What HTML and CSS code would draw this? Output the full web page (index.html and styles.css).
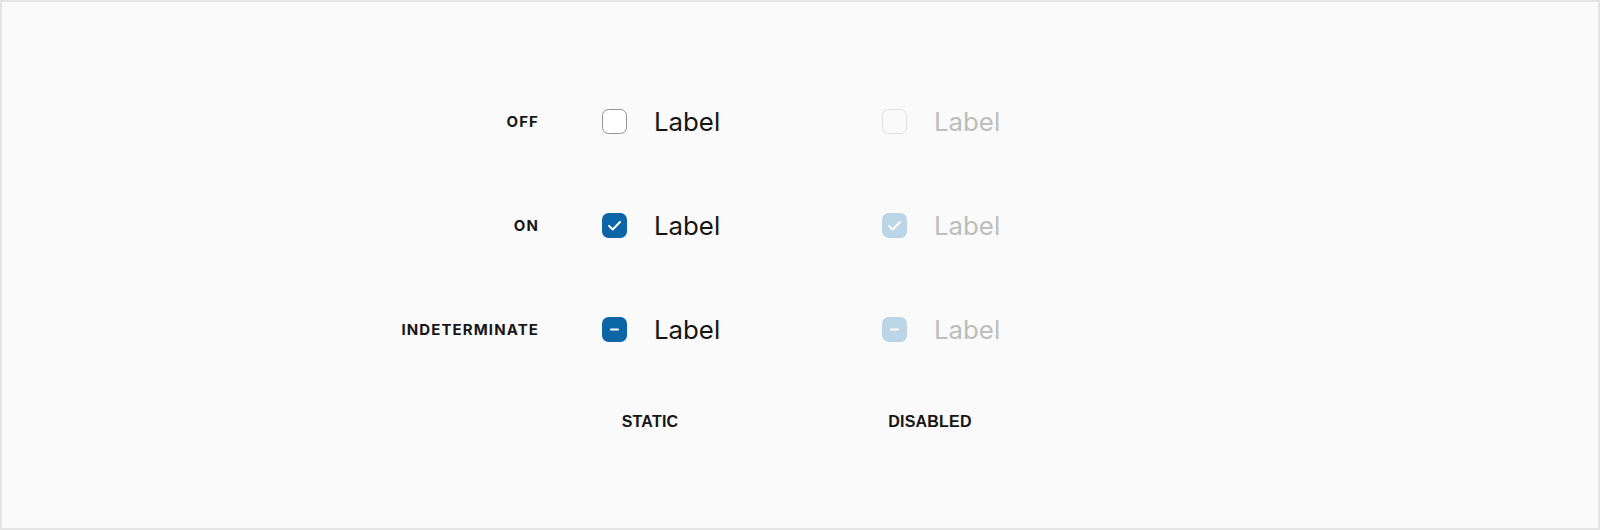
FILE: index.html
```html
<!DOCTYPE html>
<html>
<head>
<meta charset="utf-8">
<link rel="stylesheet" href="styles.css">
</head>
<body>
<div class="frame">
  <div class="grid">
    <div class="row-label">OFF</div>
    <div class="cell">
      <span class="box box-off"></span><span class="label">Label</span>
    </div>
    <div class="cell">
      <span class="box box-off-disabled"></span><span class="label label-disabled">Label</span>
    </div>

    <div class="row-label">ON</div>
    <div class="cell">
      <span class="box box-on"><svg viewBox="0 0 25 25" width="25" height="25"><path d="M7 12.9 L10.7 16.5 L18 9" fill="none" stroke="#fff" stroke-width="2" stroke-linecap="round" stroke-linejoin="round"/></svg></span><span class="label">Label</span>
    </div>
    <div class="cell">
      <span class="box box-on-disabled"><svg viewBox="0 0 25 25" width="25" height="25"><path d="M7 12.9 L10.7 16.5 L18 9" fill="none" stroke="#fff" stroke-width="2" stroke-linecap="round" stroke-linejoin="round"/></svg></span><span class="label label-disabled">Label</span>
    </div>

    <div class="row-label">INDETERMINATE</div>
    <div class="cell">
      <span class="box box-on"><svg viewBox="0 0 25 25" width="25" height="25"><path d="M9 12.5 H16" fill="none" stroke="#fff" stroke-width="2" stroke-linecap="round"/></svg></span><span class="label">Label</span>
    </div>
    <div class="cell">
      <span class="box box-on-disabled"><svg viewBox="0 0 25 25" width="25" height="25"><path d="M9 12.5 H16" fill="none" stroke="#fff" stroke-width="2" stroke-linecap="round"/></svg></span><span class="label label-disabled">Label</span>
    </div>

    <div></div>
    <div class="col-head">STATIC</div>
    <div class="col-head">DISABLED</div>
  </div>
</div>
</body>
</html>
```

FILE: styles.css
```css
html, body {
  margin: 0;
  padding: 0;
}
body {
  width: 1600px;
  height: 530px;
  background: #fafafa;
}
.frame {
  box-sizing: border-box;
  width: 1600px;
  height: 530px;
  border: 2px solid #e4e4e4;
  background: #fafafa;
  padding-top: 68px;
}
.grid {
  display: grid;
  grid-template-columns: 536px 216px auto;
  grid-template-rows: 103.5px 104px 104px 78px;
  column-gap: 64px;
  align-items: center;
}
.row-label {
  text-align: right;
  font-family: Inter, "Noto Sans", sans-serif;
  font-weight: 700;
  font-size: 15px;
  letter-spacing: 1.1px;
  color: #161616;
  margin-right: -1px;
}
.cell {
  display: flex;
  align-items: center;
  gap: 27px;
}
.box {
  box-sizing: border-box;
  width: 25px;
  height: 25px;
  border-radius: 6.5px;
  display: flex;
  flex: none;
}
.box svg {
  display: block;
}
.box-off {
  border: 1.6px solid #939393;
  background: #ffffff;
}
.box-off-disabled {
  border: 1.6px solid #e0e0e0;
  background: #fafafa;
}
.box-on {
  background: #0b65a6;
}
.box-on-disabled {
  background: #bcd5e6;
}
.label {
  font-family: Inter, "Noto Sans", sans-serif;
  font-size: 25.8px;
  font-weight: 400;
  color: #141414;
  line-height: 1;
}
.label-disabled {
  color: #bdbdbd;
}
.col-head {
  width: 96px;
  text-align: center;
  white-space: nowrap;
  font-family: "Liberation Sans", Arial, sans-serif;
  font-weight: 700;
  font-size: 16px;
  letter-spacing: 0.2px;
  color: #161616;
  padding-top: 2px;
}
```
